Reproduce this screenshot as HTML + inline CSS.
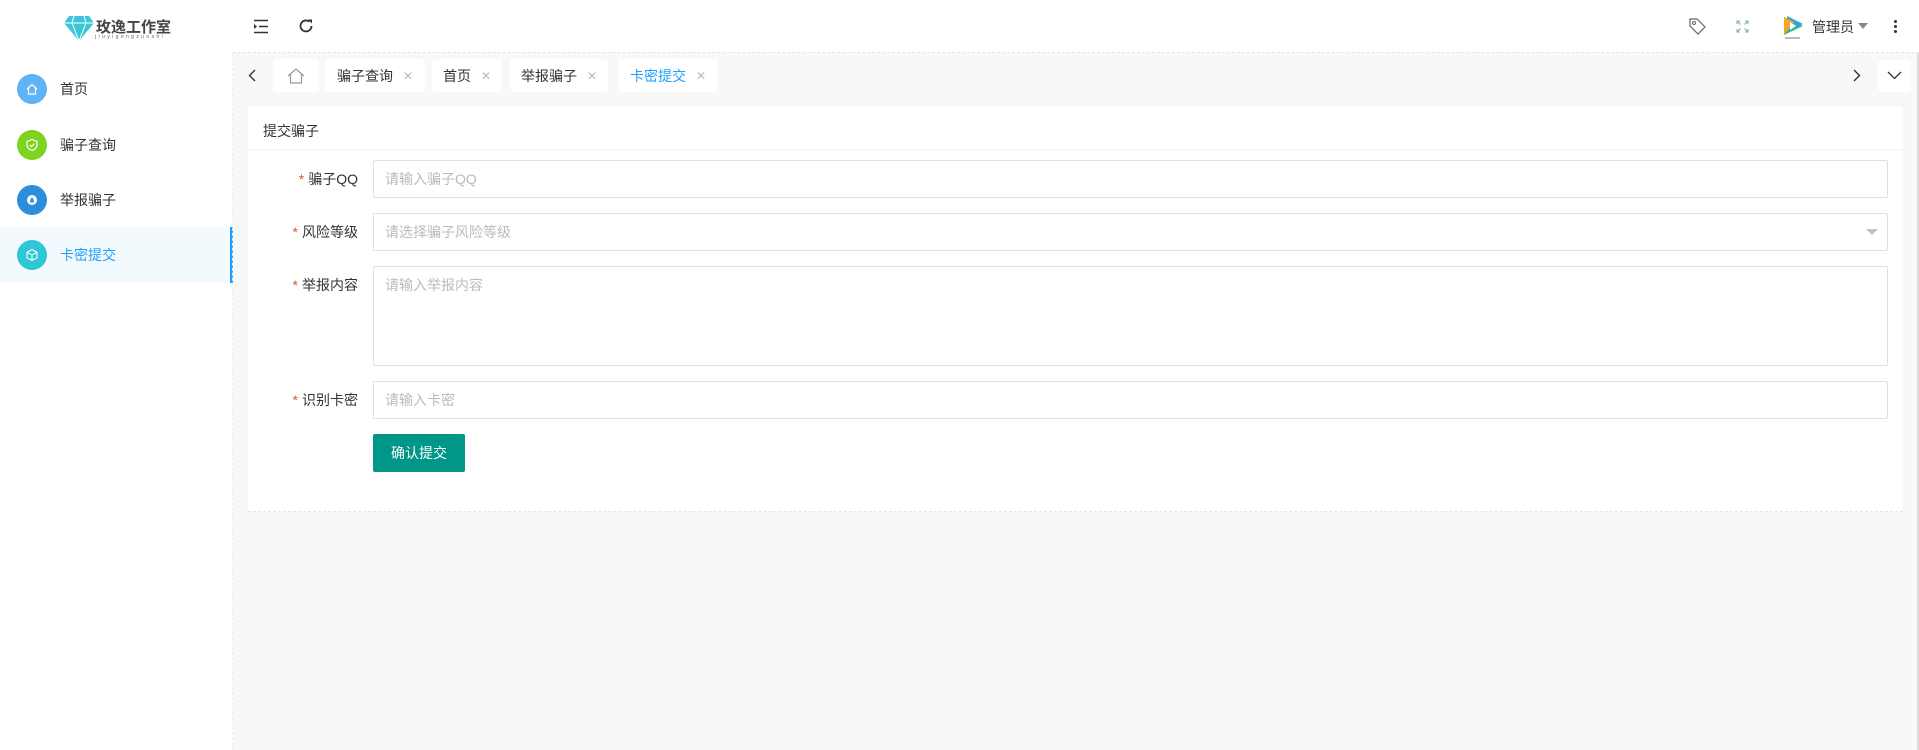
<!DOCTYPE html>
<html><head><meta charset="utf-8"><style>
*{box-sizing:border-box;margin:0;padding:0}
body{width:1919px;height:750px;overflow:hidden;background:#f7f9f9;font-family:"Liberation Sans","Noto Sans CJK SC",sans-serif;font-size:14px;color:#333;position:relative}
.side{position:absolute;left:0;top:0;width:233px;height:750px;background:#fff}
.item{position:absolute;left:0;width:233px;height:56px;display:flex;align-items:center}
.item .ic{width:30px;height:30px;border-radius:50%;margin-left:17px;display:flex;align-items:center;justify-content:center}
.item span{margin-left:13px;font-size:14px;color:#333}
.item.act{background:#f3fafe;border-right:3px solid #1e9fff}
.item.act span{color:#1e9fff}
.head{position:absolute;left:233px;top:0;right:0;height:53px;background:#fff;border-bottom:1px dashed #dde8ee}
.tab{position:absolute;top:59px;height:33px;background:#fff;border-radius:4px;display:flex;align-items:center;justify-content:center;font-size:14px;color:#333}
.tab i{font-style:normal;color:#bbb;margin-left:10px;font-size:12px}
.card{position:absolute;left:248px;top:107px;width:1655px;height:405px;background:#fff;border-bottom:1px dashed #cdeef6}
.lbl{position:absolute;right:1545px;font-size:14px;color:#333;text-align:right}
.lbl b{color:#e0553a;font-weight:normal;margin-right:4px}
.inp{position:absolute;left:125px;width:1515px;border:1px solid #e0e0e0;border-radius:2px;color:#bbb;font-size:14px;padding-left:11px;display:flex;align-items:center}
</style></head><body>
<div class="side">
  <svg style="position:absolute;left:64px;top:15px" width="30" height="26" viewBox="0 0 30 26"><polygon points="5,1 25,1 30,8 15,26 0,8" fill="#3cc7d8"/><polyline points="0,8 30,8" stroke="#fff" stroke-width="1"/><polyline points="10,1 8,8 15,26 22,8 20,1" stroke="#fff" stroke-width="1" fill="none"/></svg>
  <div style="position:absolute;left:96px;top:16px;font-size:15px;font-weight:bold;color:#444;letter-spacing:0">玫逸工作室</div>
  <div style="position:absolute;left:95px;top:34px;font-size:5px;color:#666;letter-spacing:2.4px">jiuyigongzuoshi</div>
  <div class="item" style="top:61px"><div class="ic" style="background:#5fb3f6"><svg width="14" height="14" viewBox="0 0 14 14"><path d="M2 7L7 2.5 12 7M3.5 6v6h7V6" stroke="#fff" fill="none" stroke-width="1.2"/></svg></div><span>首页</span></div>
  <div class="item" style="top:117px"><div class="ic" style="background:#7ed321"><svg width="14" height="14" viewBox="0 0 14 14"><path d="M7 1.5L12 3.5V7c0 3-2.5 4.5-5 5.5C4.5 11.5 2 10 2 7V3.5z" stroke="#fff" fill="none" stroke-width="1.2"/><path d="M4.8 7l1.6 1.6L9.4 5.6" stroke="#fff" fill="none" stroke-width="1.2"/></svg></div><span>骗子查询</span></div>
  <div class="item" style="top:172px"><div class="ic" style="background:#2d8fdc"><svg width="14" height="14" viewBox="0 0 14 14"><circle cx="7" cy="7" r="5" fill="#fff"/><path d="M5 9.5C5 7 6 5 7 4.5 8 5 9 7 9 9.5z" fill="#2d8fdc"/></svg></div><span>举报骗子</span></div>
  <div class="item act" style="top:227px"><div class="ic" style="background:#2dc7d8"><svg width="14" height="14" viewBox="0 0 14 14"><path d="M7 1.5l5 2.8v5.4L7 12.5 2 9.7V4.3z M2 4.3L7 7l5-2.7M7 7v5.5" stroke="#fff" fill="none" stroke-width="1.1"/></svg></div><span>卡密提交</span></div>
</div>
<div style="position:absolute;left:232px;top:53px;width:1px;height:697px;border-left:1px dashed #e2f1f6"></div>
<div class="head">
  <svg style="position:absolute;left:20px;top:19px" width="16" height="15" viewBox="0 0 16 15"><path d="M1 1.5h14M6 7.5h9M1 13.5h14" stroke="#333" stroke-width="1.6"/><path d="M1 5v5l3-2.5z" fill="#333"/></svg>
  <svg style="position:absolute;left:65px;top:18px" width="16" height="16" viewBox="0 0 16 16"><path d="M13.5 8A5.5 5.5 0 1 1 11.5 3.7" stroke="#333" stroke-width="1.8" fill="none"/><path d="M10 1.5h4v4z" fill="#333"/></svg>
  <svg style="position:absolute;left:1454px;top:16px" width="20" height="20" viewBox="0 0 20 20"><path d="M3 3h7l8 8-7 7-8-8z" stroke="#666" stroke-width="1.2" fill="none"/><circle cx="7" cy="7" r="1.5" stroke="#666" fill="none"/></svg>
  <svg style="position:absolute;left:1503px;top:20px" width="13" height="13" viewBox="0 0 13 13"><path d="M1 4V1h3M9 1h3v3M12 9v3H9M4 12H1V9M1 1l3.5 3.5M12 1L8.5 4.5M12 12L8.5 8.5M1 12l3.5-3.5" stroke="#8aa" stroke-width="1.1" fill="none"/></svg>
  <svg style="position:absolute;left:1549px;top:14px" width="24" height="26" viewBox="0 0 24 26"><path d="M2 3L21 12 2 21z" fill="#2dc46b"/><path d="M5 2L21 10 5 18z" fill="#2ca6e0"/><path d="M2 3l10 5-10 13z" fill="#f5a623"/><path d="M8 8l6 4-6 4z" fill="#fff"/><rect x="3" y="23" width="15" height="2" fill="#bbb"/></svg>
  <div style="position:absolute;left:1579px;top:17px;font-size:14px;color:#333">管理员</div>
  <div style="position:absolute;left:1625px;top:23px;width:0;height:0;border-left:5px solid transparent;border-right:5px solid transparent;border-top:6px solid #888"></div>
  <div style="position:absolute;left:1661px;top:20px;width:3px;height:3px;background:#333;box-shadow:0 5px 0 #333,0 10px 0 #333;border-radius:50%"></div>
</div>
<svg style="position:absolute;left:248px;top:69px" width="8" height="13" viewBox="0 0 8 13"><path d="M7 1L1.5 6.5 7 12" stroke="#333" stroke-width="1.4" fill="none"/></svg>
<div class="tab" style="left:273px;width:46px"><svg width="18" height="16" viewBox="0 0 18 16"><path d="M1 8L9 1l8 7M3.5 6v9h11V6" stroke="#999" fill="none" stroke-width="1.2"/></svg></div>
<div class="tab" style="left:325px;width:100px">骗子查询<i>✕</i></div>
<div class="tab" style="left:432px;width:70px">首页<i>✕</i></div>
<div class="tab" style="left:510px;width:98px">举报骗子<i>✕</i></div>
<div class="tab" style="left:618px;width:100px;color:#1e9fff">卡密提交<i>✕</i></div>
<svg style="position:absolute;left:1853px;top:69px" width="8" height="13" viewBox="0 0 8 13"><path d="M1 1l5.5 5.5L1 12" stroke="#333" stroke-width="1.4" fill="none"/></svg>
<div style="position:absolute;left:1878px;top:60px;width:33px;height:32px;background:#fff;border-radius:4px"><svg style="position:absolute;left:9px;top:11px" width="15" height="9" viewBox="0 0 15 9"><path d="M1 1l6.5 6.5L14 1" stroke="#333" stroke-width="1.3" fill="none"/></svg></div>
<div style="position:absolute;left:1917px;top:53px;width:2px;height:697px;background:#ddd"></div>
<div class="card">
  <div style="position:absolute;left:15px;top:14px;font-size:14px;color:#333">提交骗子</div>
  <div style="position:absolute;left:0;right:0;top:42px;border-top:1px solid #f4f4f4"></div>
  <div class="lbl" style="top:62px"><b>*</b>骗子QQ</div>
  <div class="inp" style="top:53px;height:38px">请输入骗子QQ</div>
  <div class="lbl" style="top:115px"><b>*</b>风险等级</div>
  <div class="inp" style="top:106px;height:38px">请选择骗子风险等级<div style="position:absolute;right:9px;top:15px;border-left:6px solid transparent;border-right:6px solid transparent;border-top:6px solid #c2c2c2"></div></div>
  <div class="lbl" style="top:168px"><b>*</b>举报内容</div>
  <div class="inp" style="top:159px;height:100px;align-items:flex-start;padding-top:8px">请输入举报内容</div>
  <div class="lbl" style="top:283px"><b>*</b>识别卡密</div>
  <div class="inp" style="top:274px;height:38px">请输入卡密</div>
  <div style="position:absolute;left:125px;top:327px;width:92px;height:38px;background:#009688;border-radius:2px;color:#fff;font-size:14px;display:flex;align-items:center;justify-content:center">确认提交</div>
</div>
</body></html>
